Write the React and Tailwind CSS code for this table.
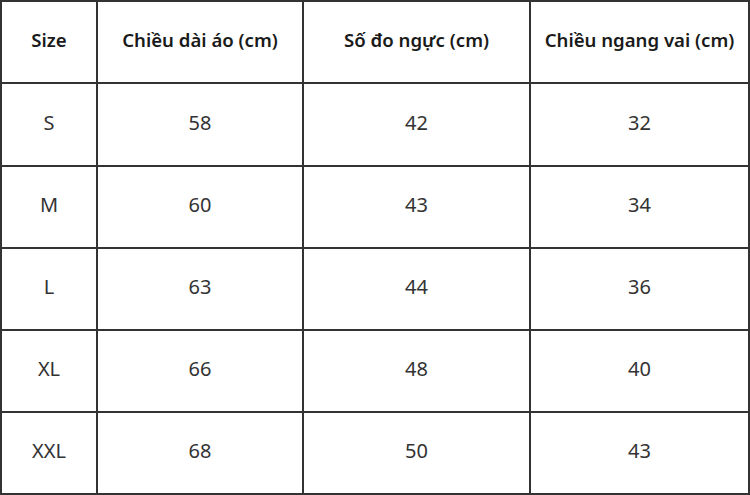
import React from "react";

const rows = [
  ["S", "58", "42", "32"],
  ["M", "60", "43", "34"],
  ["L", "63", "44", "36"],
  ["XL", "66", "48", "40"],
  ["XXL", "68", "50", "43"],
];

export default function App() {
  return (
    <div className="w-[750px] h-[495px] bg-white" style={{ fontFamily: "'Noto Sans', sans-serif" }}>
      <div className="grid grid-cols-[96px_206px_227px_1fr] grid-rows-[82px_83px_82px_82px_82px_82px] w-[750px] border-r-2 border-b-2 border-[#333]">
        {["Size", "Chiều dài áo (cm)", "Số đo ngực (cm)", "Chiều ngang vai (cm)"].map((h) => (
          <div key={h} className="flex items-center justify-center pb-1 border-l-2 border-t-2 border-[#333] text-[18.6px] font-semibold text-[#1a1a1a]">
            {h}
          </div>
        ))}
        {rows.map((r) =>
          r.map((c, i) => (
            <div key={r[0] + i} className="flex items-center justify-center pb-1 border-l-2 border-t-2 border-[#333] text-[20px] text-[#333]">
              {c}
            </div>
          ))
        )}
      </div>
    </div>
  );
}
